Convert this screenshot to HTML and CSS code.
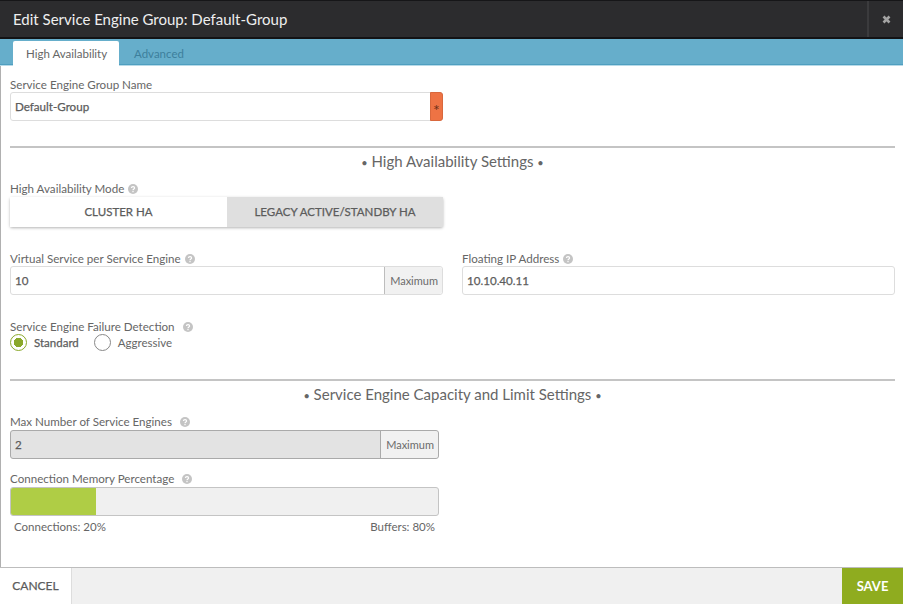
FILE: index.html
```html
<!DOCTYPE html>
<html lang="en">
<head>
    <meta charset="UTF-8">
    <title>Edit Service Engine Group</title>
    <link rel="stylesheet" href="styles.css">
</head>
<body>

    <div class="modal">

        <div class="header">
            <div class="title">Edit Service Engine Group: Default-Group</div>
            <div class="close">
                <svg width="9" height="9" viewBox="0 0 9 9"><path d="M1.5 1.5 7.5 7.5M7.5 1.5 1.5 7.5" stroke="#a3a3a3" stroke-width="2.6"/></svg>
            </div>
        </div>

        <div class="tabs">
            <div class="tab active">High Availability</div>
            <div class="tab">Advanced</div>
        </div>

        <div class="content">

            <div class="label name-label">Service Engine Group Name</div>
            <div class="input-row half">
                <div class="value grow">Default-Group</div>
                <div class="required">*</div>
            </div>

            <div class="section first-section">
                <div class="section-title"><span class="dot">•</span> High Availability Settings <span class="dot">•</span></div>
            </div>

            <div class="label mode-label">High Availability Mode <svg class="help" viewBox="0 0 10 10"><use href="#help"/></svg></div>
            <div class="toggle half">
                <div class="toggle-btn on">CLUSTER HA</div>
                <div class="toggle-btn off">LEGACY ACTIVE/STANDBY HA</div>
            </div>

            <div class="columns">
                <div class="col-left">
                    <div class="label">Virtual Service per Service Engine <svg class="help" viewBox="0 0 10 10"><use href="#help"/></svg></div>
                    <div class="input-row">
                        <div class="value grow">10</div>
                        <div class="addon">Maximum</div>
                    </div>
                </div>
                <div class="col-right">
                    <div class="label">Floating IP Address <svg class="help" viewBox="0 0 10 10"><use href="#help"/></svg></div>
                    <div class="input-row">
                        <div class="value grow">10.10.40.11</div>
                    </div>
                </div>
            </div>

            <div class="label failure-label">Service Engine Failure Detection <svg class="help wide" viewBox="0 0 10 10"><use href="#help"/></svg></div>
            <div class="radios">
                <div class="radio checked"></div>
                <div class="radio-text strong">Standard</div>
                <div class="radio"></div>
                <div class="radio-text">Aggressive</div>
            </div>

            <div class="section second-section">
                <div class="section-title"><span class="dot">•</span> Service Engine Capacity and Limit Settings <span class="dot">•</span></div>
            </div>

            <div class="narrow">
                <div class="label max-label">Max Number of Service Engines <svg class="help wide" viewBox="0 0 10 10"><use href="#help"/></svg></div>
                <div class="input-row disabled">
                    <div class="value grow">2</div>
                    <div class="addon">Maximum</div>
                </div>

                <div class="label memory-label">Connection Memory Percentage <svg class="help wide" viewBox="0 0 10 10"><use href="#help"/></svg></div>
                <div class="slider">
                    <div class="slider-fill" style="width: 20%"></div>
                </div>
                <div class="slider-values">
                    <span>Connections: 20%</span>
                    <span>Buffers: 80%</span>
                </div>
            </div>

        </div>

        <div class="footer">
            <div class="cancel">CANCEL</div>
            <div class="save">SAVE</div>
        </div>

    </div>

    <svg class="defs" width="0" height="0">
        <symbol id="help" viewBox="0 0 10 10">
            <circle cx="5" cy="5" r="5" fill="#c4c4c4"/>
            <path d="M3.4 4C3.5 2.2 6.6 2.2 6.6 4 6.6 5 5 5 5 6.2" fill="none" stroke="white" stroke-width="1.2"/>
            <rect x="4.4" y="7" width="1.2" height="1.2" fill="white"/>
        </symbol>
    </svg>

</body>
</html>
```

FILE: styles.css
```css
* {
    margin: 0;
    padding: 0;
    box-sizing: border-box;
    font-family: Lato, "Open Sans", sans-serif;
}

body {
    background-color: white;
    overflow: hidden;
}

.defs {
    display: block;
}

.modal {
    width: 903px;
    height: 604px;
    display: flex;
    flex-direction: column;
}

/* ---------- header ---------- */

.header {
    height: 39px;
    flex-shrink: 0;
    display: flex;
    background-color: #2c2c2e;
    border-top: 1px solid #161618;
    border-bottom: 2px solid #131315;
}

.title {
    flex-grow: 1;
    padding-left: 13px;
    font-size: 15px;
    line-height: 37px;
    color: #eeeeee;
}

.close {
    width: 36px;
    display: flex;
    align-items: center;
    justify-content: center;
    border-left: 2px solid #3b3b3d;
}

/* ---------- tabs ---------- */

.tabs {
    height: 27px;
    flex-shrink: 0;
    display: flex;
    padding: 2px 0 0 13px;
    background-color: #66aecb;
    border-bottom: 1px solid #b7dae8;
    box-shadow: inset 0 -1px 0 #4f9fc0;
}

.tab {
    font-size: 11.5px;
    line-height: 25px;
    padding: 0 15px;
    white-space: nowrap;
    color: #3d7f9c;
}

.tab.active {
    width: 106px;
    height: 26px;
    padding: 0 13px;
    background-color: white;
    color: #666666;
    border-radius: 2px 2px 0 0;
    position: relative;
    z-index: 1;
}

/* ---------- form ---------- */

.content {
    flex-grow: 1;
    padding: 0 8px 0 9px;
    border-left: 1px solid #b0b0b0;
    color: #5f5f5f;
}

.label {
    font-size: 11.6px;
    line-height: 15px;
    height: 15px;
    color: #666666;
}

.name-label {
    margin-top: 11px;
}

.half {
    width: 433px;
}

.input-row {
    display: flex;
    height: 29px;
    background-color: white;
    border: 1px solid #dddddd;
    border-radius: 3px;
    font-size: 11.6px;
}

/* Lato has no medium here, a thin stroke stands in for it */
.value {
    padding-left: 4px;
    line-height: 27px;
    color: #5c5c5c;
    -webkit-text-stroke: 0.25px #5c5c5c;
}

.grow {
    flex-grow: 1;
}

.required {
    width: 13px;
    margin: -1px;
    background-color: #ee7344;
    border: 1px solid #d9683d;
    border-radius: 0 3px 3px 0;
    color: #6e3119;
    font-size: 16px;
    line-height: 33px;
    text-align: center;
}

.addon {
    padding: 0 4px 0 5px;
    line-height: 27px;
    background-color: #f1f1f1;
    border-left: 1px solid #bdbdbd;
    border-radius: 0 3px 3px 0;
    color: #6b6b6b;
    font-size: 11px;
}

.section {
    height: 30px;
    border-top: 2px solid #c4c4c4;
    text-align: center;
}

.first-section {
    margin-top: 25px;
}

.second-section {
    margin-top: 28px;
}

.section-title {
    font-size: 15px;
    line-height: 27px;
    color: #666666;
}

.dot {
    font-size: 11px;
}

.mode-label {
    margin-top: 5px;
}

.help {
    width: 10px;
    height: 10px;
    margin-left: 1px;
    vertical-align: -1px;
}

.help.wide {
    margin-left: 5px;
}

.toggle {
    display: flex;
    height: 30px;
    margin-top: 1px;
    font-size: 11.5px;
    line-height: 30px;
    text-align: center;
    color: #5c5c5c;
    -webkit-text-stroke: 0.25px #5c5c5c;
    box-shadow: 0 1px 3px rgba(0, 0, 0, 0.3);
    border-radius: 2px;
}

.toggle-btn.on {
    width: 217px;
    background-color: white;
}

.toggle-btn.off {
    flex-grow: 1;
    background-color: #dfdfdf;
}

.columns {
    display: flex;
    gap: 19px;
    margin-top: 24px;
}

.col-left {
    width: 433px;
}

.col-right {
    flex-grow: 1;
}

.failure-label {
    margin-top: 24px;
}

.radios {
    display: flex;
    align-items: center;
    height: 18px;
    margin-top: -1px;
    font-size: 11.5px;
    color: #666666;
}

.radio {
    width: 17px;
    height: 17px;
    border: 1px solid #888888;
    border-radius: 50%;
    background-color: white;
}

.radio.checked {
    border-color: #8aa82a;
    background: radial-gradient(circle, #8aa82a 0, #8aa82a 4.5px, white 5px);
}

.radio-text {
    margin: 0 15px 0 7px;
}

.radio-text.strong {
    color: #5c5c5c;
    -webkit-text-stroke: 0.25px #5c5c5c;
}

.narrow {
    width: 429px;
}

.max-label {
    margin-top: 5px;
}

.disabled {
    margin-top: 1px;
    background-color: #e3e3e3;
    border-color: #aaaaaa;
}

.disabled .addon {
    background-color: #f1f1f1;
    border-left-color: #aaaaaa;
}

.memory-label {
    margin-top: 12px;
}

.slider {
    height: 29px;
    margin-top: 1px;
    background-color: #f0f0f0;
    border: 1px solid #c4c4c4;
    border-radius: 3px;
    overflow: hidden;
}

.slider-fill {
    height: 100%;
    background-color: #afcd45;
}

.slider-values {
    display: flex;
    justify-content: space-between;
    padding: 3px 4px 0;
    font-size: 11.5px;
    line-height: 15px;
    color: #666666;
}

/* ---------- footer ---------- */

.footer {
    height: 37px;
    flex-shrink: 0;
    display: flex;
    justify-content: space-between;
    background-color: #f0f0f0;
    border-top: 1px solid #bdbdbd;
    font-size: 13px;
    font-weight: 700;
    line-height: 36px;
    text-align: center;
}

.cancel {
    width: 72px;
    background-color: white;
    border-right: 1px solid #dddddd;
    font-size: 12px;
    font-weight: 400;
    color: #5c5c5c;
    -webkit-text-stroke: 0.25px #5c5c5c;
}

.save {
    width: 61px;
    background-color: #8fac1f;
    color: white;
}
```
